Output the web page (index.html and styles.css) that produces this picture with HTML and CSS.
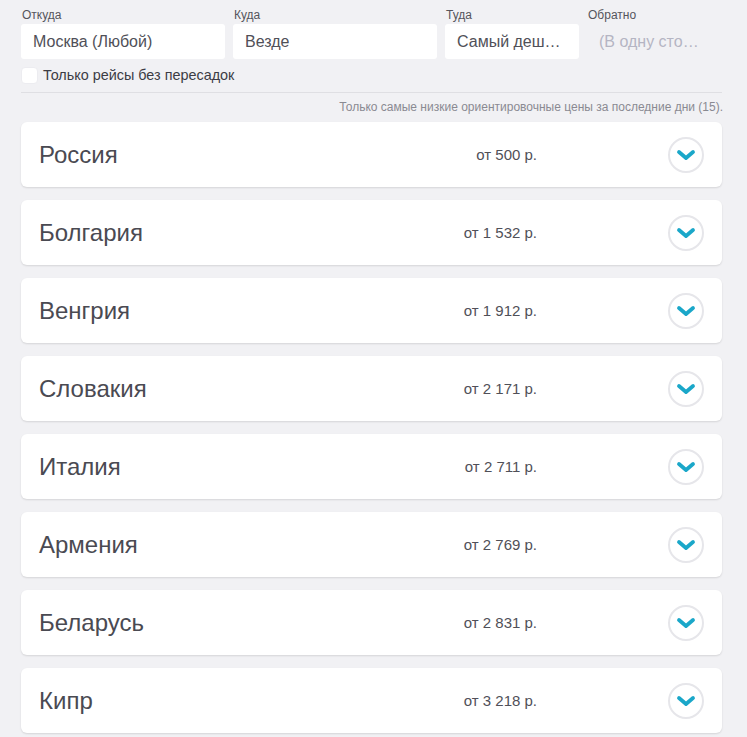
FILE: index.html
```html
<!DOCTYPE html>
<html lang="ru">
<head>
    <meta charset="UTF-8">
    <title>Дешёвые билеты — куда угодно</title>
    <link rel="stylesheet" href="styles.css">
</head>
<body>
    <div class="search">
        <div class="fields">
            <div class="field field-wide">
                <label>Откуда</label>
                <div class="box">Москва (Любой)</div>
            </div>
            <div class="field field-wide">
                <label>Куда</label>
                <div class="box">Везде</div>
            </div>
            <div class="field">
                <label>Туда</label>
                <div class="box" title="Самый дешёвый">Самый деш…</div>
            </div>
            <div class="field">
                <label>Обратно</label>
                <div class="box box-empty" title="(В одну сторону)">(В одну сто…</div>
            </div>
        </div>

        <label class="direct">
            <span class="check"></span>
            Только рейсы без пересадок
        </label>
    </div>

    <div class="note">Только самые низкие ориентировочные цены за последние дни (15).</div>

    <div class="results">
        <div class="country">
            <div class="country-name">Россия</div>
            <div class="country-price">от 500 р.</div>
            <button class="expand" type="button" aria-label="Показать"><svg viewBox="0 0 20 12"><path d="M3 3l7 6 7-6"/></svg></button>
        </div>
        <div class="country">
            <div class="country-name">Болгария</div>
            <div class="country-price">от 1 532 р.</div>
            <button class="expand" type="button" aria-label="Показать"><svg viewBox="0 0 20 12"><path d="M3 3l7 6 7-6"/></svg></button>
        </div>
        <div class="country">
            <div class="country-name">Венгрия</div>
            <div class="country-price">от 1 912 р.</div>
            <button class="expand" type="button" aria-label="Показать"><svg viewBox="0 0 20 12"><path d="M3 3l7 6 7-6"/></svg></button>
        </div>
        <div class="country">
            <div class="country-name">Словакия</div>
            <div class="country-price">от 2 171 р.</div>
            <button class="expand" type="button" aria-label="Показать"><svg viewBox="0 0 20 12"><path d="M3 3l7 6 7-6"/></svg></button>
        </div>
        <div class="country">
            <div class="country-name">Италия</div>
            <div class="country-price">от 2 711 р.</div>
            <button class="expand" type="button" aria-label="Показать"><svg viewBox="0 0 20 12"><path d="M3 3l7 6 7-6"/></svg></button>
        </div>
        <div class="country">
            <div class="country-name">Армения</div>
            <div class="country-price">от 2 769 р.</div>
            <button class="expand" type="button" aria-label="Показать"><svg viewBox="0 0 20 12"><path d="M3 3l7 6 7-6"/></svg></button>
        </div>
        <div class="country">
            <div class="country-name">Беларусь</div>
            <div class="country-price">от 2 831 р.</div>
            <button class="expand" type="button" aria-label="Показать"><svg viewBox="0 0 20 12"><path d="M3 3l7 6 7-6"/></svg></button>
        </div>
        <div class="country">
            <div class="country-name">Кипр</div>
            <div class="country-price">от 3 218 р.</div>
            <button class="expand" type="button" aria-label="Показать"><svg viewBox="0 0 20 12"><path d="M3 3l7 6 7-6"/></svg></button>
        </div>
    </div>
</body>
</html>
```

FILE: styles.css
```css
* {
    margin: 0;
    padding: 0;
    box-sizing: border-box;
}

body {
    font-family: 'Liberation Sans', Arial, sans-serif;
    background: #f1f1f4;
    color: #505058;
    padding: 7px 25px 0 21px;
    height: 737px;
    overflow: hidden;
}

.search {
    border-bottom: 1px solid #dfdfe3;
    padding-bottom: 8px;
}

.fields {
    display: flex;
    gap: 8px;
}

.field {
    width: 134px;
}

.field-wide {
    width: 204px;
}

.field label {
    display: block;
    font-size: 12px;
    line-height: 16px;
    color: #55555c;
    margin-left: 1px;
    margin-bottom: 1px;
}

.box {
    height: 35px;
    line-height: 35px;
    padding: 0 12px;
    background: #fff;
    border-radius: 3px;
    font-size: 16px;
    color: #505058;
    white-space: nowrap;
}

.box-empty {
    background: transparent;
    color: #b5b5c3;
}

.direct {
    display: flex;
    align-items: center;
    gap: 5px;
    margin-top: 8px;
    font-size: 14.4px;
    line-height: 17px;
    color: #3c3c44;
}

.check {
    width: 17px;
    height: 17px;
    background: #fff;
    border-radius: 4px;
    border: 1px solid #ececf0;
}

.note {
    text-align: right;
    font-size: 12px;
    line-height: 14px;
    color: #8a8a92;
    margin-top: 7px;
    margin-right: -1px;
}

.results {
    display: flex;
    flex-direction: column;
    gap: 13px;
    margin-top: 8px;
}

.country {
    display: flex;
    align-items: center;
    height: 65px;
    padding: 0 18px;
    background: #fff;
    border-radius: 6px;
    box-shadow: 0 1px 2px rgba(0, 0, 0, 0.12);
}

.country-name {
    flex: 1;
    font-size: 24px;
    color: #4a4a52;
}

.country-price {
    font-size: 15px;
    color: #505058;
    margin-right: 131px;
}

.expand {
    width: 36px;
    height: 36px;
    border-radius: 50%;
    border: 2px solid #e6e6ea;
    background: #fff;
    display: flex;
    align-items: center;
    justify-content: center;
    cursor: pointer;
}

.expand svg {
    width: 20px;
    height: 12px;
    fill: none;
    stroke: #1aa7c9;
    stroke-width: 3.8;
    stroke-linecap: round;
    stroke-linejoin: round;
}
```
